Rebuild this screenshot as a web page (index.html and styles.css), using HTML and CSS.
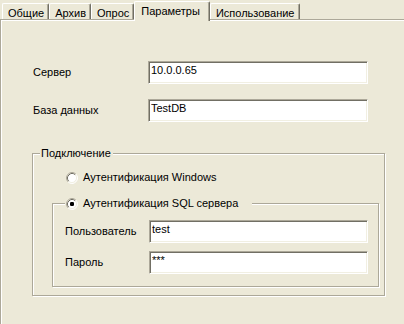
FILE: index.html
```html
<!DOCTYPE html>
<html lang="ru">
<head>
<meta charset="utf-8">
<title>Параметры</title>
<link rel="stylesheet" href="styles.css">
</head>
<body>
<div class="tabs">
  <div class="tab">Общие</div>
  <div class="tab">Архив</div>
  <div class="tab">Опрос</div>
  <div class="tab tab-active">Параметры</div>
  <div class="tab">Использование</div>
</div>
<div class="panel">
  <div class="row">
    <span class="lbl">Сервер</span>
    <input class="field" type="text" value="10.0.0.65">
  </div>
  <div class="row">
    <span class="lbl">База данных</span>
    <input class="field" type="text" value="TestDB">
  </div>
  <fieldset class="group">
    <legend class="group-title">Подключение</legend>
    <div class="opt opt-win">
      <svg class="radio" viewBox="0 0 12 12" width="12" height="12">
        <circle cx="6" cy="6" r="5" fill="#fff"/>
        <path d="M2.11 9.89A5.5 5.5 0 0 1 9.89 2.11" fill="none" stroke="#ACA899"/>
        <path d="M9.89 2.11A5.5 5.5 0 0 1 2.11 9.89" fill="none" stroke="#fff"/>
        <path d="M2.82 9.18A4.5 4.5 0 0 1 9.18 2.82" fill="none" stroke="#716F64"/>
        <path d="M9.18 2.82A4.5 4.5 0 0 1 2.82 9.18" fill="none" stroke="#F1EFE2"/>
      </svg>
      <span>Аутентификация Windows</span>
    </div>
    <fieldset class="group inner">
      <legend class="opt opt-legend">
        <svg class="radio" viewBox="0 0 12 12" width="12" height="12">
          <circle cx="6" cy="6" r="5" fill="#fff"/>
          <path d="M2.11 9.89A5.5 5.5 0 0 1 9.89 2.11" fill="none" stroke="#ACA899"/>
          <path d="M9.89 2.11A5.5 5.5 0 0 1 2.11 9.89" fill="none" stroke="#fff"/>
          <path d="M2.82 9.18A4.5 4.5 0 0 1 9.18 2.82" fill="none" stroke="#716F64"/>
          <path d="M9.18 2.82A4.5 4.5 0 0 1 2.82 9.18" fill="none" stroke="#F1EFE2"/>
          <rect x="4" y="4" width="4" height="4" rx="1.2" fill="#000"/>
        </svg>
        <span>Аутентификация SQL сервера</span>
      </legend>
      <div class="sub-row">
        <span class="sub-lbl">Пользователь</span>
        <input class="field sub-field" type="text" value="test">
      </div>
      <div class="sub-row">
        <span class="sub-lbl">Пароль</span>
        <input class="field sub-field" type="text" value="***">
      </div>
    </fieldset>
  </fieldset>
</div>
</body>
</html>
```

FILE: styles.css
```css
* {
  box-sizing: border-box;
}

html,
body {
  margin: 0;
  height: 100%;
}

body {
  background: #ECE9D8;
  color: #000;
  font: 11px/13px "Liberation Sans", Arial, sans-serif;
  display: flex;
  flex-direction: column;
  overflow: hidden;
}

/* ---- tab strip ---- */
.tabs {
  display: flex;
  align-items: flex-start;
  height: 19px;
  padding-left: 2px;
  position: relative;
  z-index: 1;
  flex: none;
}

.tab {
  margin-top: 3px;
  height: 16px;
  padding: 3px 4px 0 5px;
  border-top: 1px solid #fff;
  border-left: 1px solid #fff;
  border-right: 1px solid #716F64;
  border-radius: 2px 2px 0 0;
  box-shadow: inset -1px 0 0 #ACA899;
  background: #ECE9D8;
  white-space: nowrap;
}

.tab-active {
  margin-top: 1px;
  height: 20px;
  padding: 3px 9px 0 6px;
}

/* ---- page panel ---- */
.panel {
  flex: 1;
  border-top: 1px solid #ACA899;
  border-left: 1px solid #ACA899;
  box-shadow: inset 1px 1px 0 #fff;
  padding: 41px 0 0 32px;
}

.row {
  display: flex;
  align-items: center;
  height: 23px;
}

.row + .row {
  margin-top: 15px;
}

.lbl {
  width: 115px;
  flex: none;
}

.field {
  width: 220px;
  height: 23px;
  margin: 0;
  padding: 0 1px 6px 2px;
  font: inherit;
  color: #000;
  background: #fff;
  border: 1px solid;
  border-color: #ACA899 #fff #fff #ACA899;
  box-shadow: inset 1px 1px 0 #716F64, inset -1px -1px 0 #F1EFE2;
  outline: none;
  flex: none;
}

/* ---- group boxes ---- */
.group {
  margin: 25px 0 0 -1px;
  width: 353px;
  min-width: 0;
  padding: 0 0 8px 0;
  border: 1px solid #ACA899;
  box-shadow: 1px 1px 0 #fff, inset 1px 1px 0 #fff;
}

.group-title {
  margin-left: 7px;
  padding: 0 2px 0 1px;
  line-height: 13px;
  background: #ECE9D8;
}

.opt {
  display: flex;
  align-items: center;
  height: 13px;
}

.opt-win {
  margin: 11px 0 0 33px;
}

.radio {
  display: block;
  flex: none;
  margin-right: 5px;
}

.inner {
  margin: 13px 0 0 19px;
  width: 327px;
  padding: 0 0 12px 12px;
}

.opt-legend {
  margin-left: 0;
  padding: 0 14px 0 1px;
  background: #ECE9D8;
}

.sub-row {
  display: flex;
  align-items: center;
  height: 23px;
  margin-top: 8px;
}

.sub-row:first-of-type {
  margin-top: 10px;
}

.sub-lbl {
  width: 84px;
  flex: none;
}

.sub-field {
  width: 219px;
}
```
